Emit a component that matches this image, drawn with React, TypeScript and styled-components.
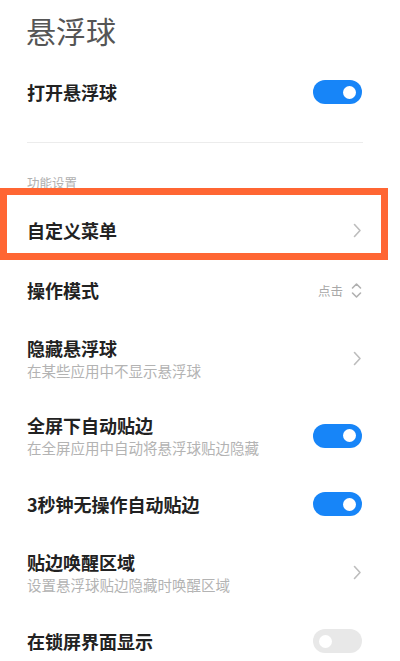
import React from "react";
import styled, { createGlobalStyle } from "styled-components";

const Global = createGlobalStyle`
  html, body { margin: 0; padding: 0; background: #ffffff; }
  body { font-family: "Noto Sans CJK SC", "Noto Sans", sans-serif; }
`;

const Page = styled.div`
  width: 400px;
  min-height: 661px;
  background: #fff;
  overflow: hidden;
`;

const Header = styled.h1`
  margin: 0;
  padding: 0 0 0 26px;
  height: 60px;
  line-height: 60px;
  font-size: 30px;
  font-weight: 400;
  color: #555555;
`;

const Row = styled.div<{ $h: number }>`
  position: relative;
  height: ${(p) => p.$h}px;
  padding: 0 38px 0 27px;
  display: flex;
  align-items: center;
  justify-content: space-between;
  box-sizing: border-box;
`;

const TextCol = styled.div`
  display: flex;
  flex-direction: column;
  gap: 3px;
`;

const Title = styled.div`
  font-size: 18px;
  line-height: 22px;
  font-weight: 700;
  color: #222222;
`;

const Sub = styled.div`
  font-size: 14.5px;
  line-height: 18px;
  color: #b3b3b3;
`;

const Divider = styled.div`
  margin: 18px 37px 0 27px;
  height: 1px;
  background: #ececec;
`;

const Section = styled.div`
  padding: 32px 0 9px 27px;
  font-size: 12.5px;
  line-height: 16px;
  color: #b0b0b0;
`;

const Track = styled.div<{ $on: boolean }>`
  width: 49px;
  height: 24px;
  border-radius: 12px;
  background: ${(p) => (p.$on ? "#1785f8" : "#e8e8e8")};
  display: flex;
  align-items: center;
  justify-content: ${(p) => (p.$on ? "flex-end" : "flex-start")};
  padding: 0 6px;
  box-sizing: border-box;
  flex-shrink: 0;
`;

const Knob = styled.div`
  width: 13px;
  height: 13px;
  border-radius: 50%;
  background: #ffffff;
`;

const Value = styled.div`
  display: flex;
  align-items: center;
  gap: 8px;
  font-size: 12.5px;
  color: #a8a8a8;
`;

const Highlight = styled.div`
  position: absolute;
  left: 0;
  top: -12px;
  width: 388px;
  height: 72px;
  border: 7px solid #ff6633;
  box-sizing: border-box;
  pointer-events: none;
`;

const Toggle = ({ on }: { on: boolean }) => (
  <Track $on={on}>
    <Knob />
  </Track>
);

const Chevron = () => (
  <svg width="10" height="15" viewBox="0 0 10 15" fill="none">
    <path d="M2.5 1.5 L8 7.5 L2.5 13.5" stroke="#bdbdbd" strokeWidth="1.6" strokeLinecap="round" strokeLinejoin="round" />
  </svg>
);

const UpDown = () => (
  <svg width="11" height="17" viewBox="0 0 11 17" fill="none">
    <path d="M1.5 6 L5.5 2 L9.5 6" stroke="#b0b0b0" strokeWidth="1.6" strokeLinecap="round" strokeLinejoin="round" />
    <path d="M1.5 11 L5.5 15 L9.5 11" stroke="#b0b0b0" strokeWidth="1.6" strokeLinecap="round" strokeLinejoin="round" />
  </svg>
);

export default function App() {
  return (
    <Page>
      <Global />
      <Header>悬浮球</Header>
      <Row $h={64}>
        <Title>打开悬浮球</Title>
        <Toggle on />
      </Row>
      <Divider />
      <Section>功能设置</Section>
      <Row $h={60}>
        <Title>自定义菜单</Title>
        <Chevron />
        <Highlight />
      </Row>
      <Row $h={60}>
        <Title>操作模式</Title>
        <Value>
          点击
          <UpDown />
        </Value>
      </Row>
      <Row $h={77}>
        <TextCol>
          <Title>隐藏悬浮球</Title>
          <Sub>在某些应用中不显示悬浮球</Sub>
        </TextCol>
        <Chevron />
      </Row>
      <Row $h={77}>
        <TextCol>
          <Title>全屏下自动贴边</Title>
          <Sub>在全屏应用中自动将悬浮球贴边隐藏</Sub>
        </TextCol>
        <Toggle on />
      </Row>
      <Row $h={60}>
        <Title>3秒钟无操作自动贴边</Title>
        <Toggle on />
      </Row>
      <Row $h={77}>
        <TextCol>
          <Title>贴边唤醒区域</Title>
          <Sub>设置悬浮球贴边隐藏时唤醒区域</Sub>
        </TextCol>
        <Chevron />
      </Row>
      <Row $h={60}>
        <Title>在锁屏界面显示</Title>
        <Toggle on={false} />
      </Row>
    </Page>
  );
}
